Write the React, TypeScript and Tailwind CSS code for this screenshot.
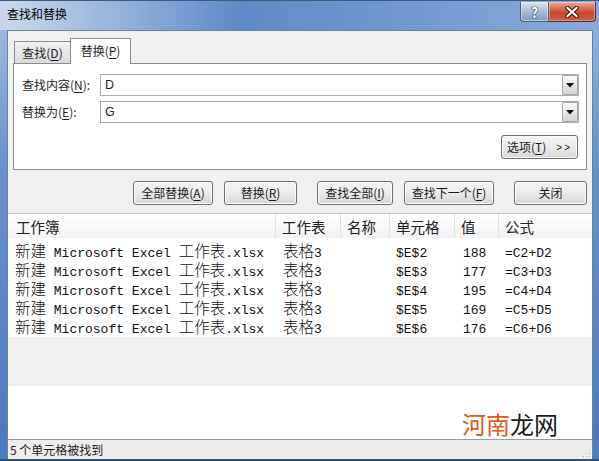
import React from "react";

const U = ({ c }: { c: string }) => (
  <span className="underline underline-offset-[2px] decoration-[1px]">{c}</span>
);

function Mixed({ t }: { t: string }) {
  const parts = t.split(/([\u4e00-\u9fff]+)/).filter((p) => p.length > 0);
  return (
    <>
      {parts.map((p, i) =>
        /[\u4e00-\u9fff]/.test(p) ? (
          <span
            key={i}
            className="inline-block font-['Noto_Sans_CJK_SC',sans-serif] font-light text-[15.5px] leading-[16px]"
          >
            {p}
          </span>
        ) : (
          <span key={i} className="inline-block font-['Liberation_Mono',monospace] text-[13px] leading-[15px]">
            {p}
          </span>
        )
      )}
    </>
  );
}

const rows = [
  ["$E$2", "188", "=C2+D2"],
  ["$E$3", "177", "=C3+D3"],
  ["$E$4", "195", "=C4+D4"],
  ["$E$5", "169", "=C5+D5"],
  ["$E$6", "176", "=C6+D6"],
];

const btn =
  "h-[24px] rounded-[3px] border border-[#707070] bg-linear-to-b from-[#f4f4f4] via-[#ebebeb] to-[#d6d6d6] flex items-center justify-center text-[12px] text-[#1b1b1b] shadow-[inset_0_0_0_1px_#fcfcfc]";

function DropBtn() {
  return (
    <div className="w-[16px] h-full border border-[#a6a6a6] rounded-[1px] bg-linear-to-b from-[#fbfbfb] to-[#d4d4d4] flex items-center justify-center">
      <svg width="8" height="5" viewBox="0 0 8 5">
        <path d="M0 0 L8 0 L4 4.5 Z" fill="#111" />
      </svg>
    </div>
  );
}

export default function App() {
  return (
    <div className="w-[599px] h-[461px] overflow-hidden flex flex-col font-['Noto_Sans_CJK_SC',sans-serif] text-[12px] text-[#1e1e1e] bg-[#4f7cbf]">
      {/* Title bar */}
      <div className="h-[30px] shrink-0 flex items-start justify-between border-t border-[#42597a] bg-linear-to-r from-[#c7d6ea] from-[2%] via-[#5e8ac7] via-[40%] to-[#88aad8]">
        <div className="pl-[7px] pt-[5px] leading-[16px] text-[12px] text-black">查找和替换</div>
        <div className="flex mr-[3px] mt-[1px]">
          <div className="w-[29px] h-[20px] rounded-bl-[4px] border border-t-0 border-[#4c5f78] bg-linear-to-b from-[#dbe5f1] via-[#a9bcd6] to-[#7f9ac0] flex items-center justify-center shadow-[inset_0_0_0_1px_rgba(255,255,255,0.45)]">
            <span className="text-white font-bold text-[14px] leading-none [text-shadow:0_0_1px_#1d2d44,0_0_1px_#1d2d44,0_0_1px_#1d2d44]">
              ?
            </span>
          </div>
          <div className="w-[47px] h-[20px] rounded-br-[4px] border border-l-0 border-t-0 border-[#5a2a22] bg-linear-to-b from-[#e8a89c] via-[#c9462f] via-[55%] to-[#c8604a] flex items-center justify-center shadow-[inset_0_0_0_1px_rgba(255,255,255,0.35)]">
            <svg width="14" height="12" viewBox="0 0 14 12">
              <path d="M2.5 2 L11.5 10 M11.5 2 L2.5 10" stroke="#3b1510" strokeWidth="4.2" strokeLinecap="square" />
              <path d="M2.5 2 L11.5 10 M11.5 2 L2.5 10" stroke="#ffffff" strokeWidth="2.2" strokeLinecap="square" />
            </svg>
          </div>
        </div>
      </div>

      {/* Body */}
      <div className="flex-1 flex min-h-0">
        <div className="w-[7px] bg-linear-to-b from-[#9bb8df] via-[#6a93cc] via-[30%] to-[#4c7ac0]" />
        <div className="w-[586px] flex flex-col bg-[#f0f0f0] border-l border-r border-t border-[#6f8198]">
          {/* Tabs */}
          <div className="mt-[7px] ml-[6px] h-[26px] flex items-end">
            <div className="mb-[1px] w-[57px] h-[22px] border border-b-0 border-[#898c95] bg-linear-to-b from-[#f2f2f2] to-[#dadada] flex items-center justify-center leading-none">
              查找(<U c="D" />)
            </div>
            <div className="relative z-10 -ml-[1px] w-[61px] h-[26px] border border-b-0 border-[#898c95] bg-white flex items-center justify-center leading-none pb-[2px]">
              替换(<U c="P" />)
            </div>
          </div>
          {/* Panel */}
          <div className="-mt-[1px] mx-[5px] h-[107px] border border-[#898c95] bg-white pt-[10px] pl-[8px] pr-[7px] flex flex-col">
            <div className="flex items-center h-[22px]">
              <div className="w-[78px]">
                查找内容(<U c="N" />):
              </div>
              <div className="flex-1 h-full border border-[#a9abb2] flex items-center justify-between pl-[4px]">
                <span className="font-['Liberation_Sans',sans-serif] text-[12.5px]">D</span>
                <DropBtn />
              </div>
            </div>
            <div className="flex items-center h-[22px] mt-[5px]">
              <div className="w-[78px]">
                替换为(<U c="E" />):
              </div>
              <div className="flex-1 h-full border border-[#a9abb2] flex items-center justify-between pl-[4px]">
                <span className="font-['Liberation_Sans',sans-serif] text-[12.5px]">G</span>
                <DropBtn />
              </div>
            </div>
            <div className="flex justify-end mt-[12px] mr-[1px]">
              <div className={`${btn} w-[77px] gap-[10px]`}>
                <span>
                  选项(<U c="T" />)
                </span>
                <span className="font-['Liberation_Sans',sans-serif] text-[10px] tracking-[2px]">&gt;&gt;</span>
              </div>
            </div>
          </div>
          {/* Buttons */}
          <div className="mt-[11px] mr-[5px] flex justify-end">
            <div className={`${btn} w-[80px]`}>
              全部替换(<U c="A" />)
            </div>
            <div className={`${btn} w-[73px] ml-[11px]`}>
              替换(<U c="R" />)
            </div>
            <div className={`${btn} w-[76px] ml-[20px]`}>
              查找全部(<U c="I" />)
            </div>
            <div className={`${btn} w-[90px] ml-[11px] border-[#3c7fb1] shadow-[inset_0_0_0_1px_#bfe6fa]`}>
              查找下一个(<U c="F" />)
            </div>
            <div className={`${btn} w-[73px] ml-[20px]`}>关闭</div>
          </div>
          {/* Results list */}
          <div className="mt-[8px] flex-1 flex flex-col bg-white">
            <div className="h-[25px] shrink-0 border-t border-[#c4c4c4] grid grid-cols-[268px_65px_49px_65px_44px_1fr] bg-linear-to-b from-white to-[#f3f3f3] text-[14.5px] text-[#222]">
              <div className="pl-[8px] pt-[1px] border-r border-[#e2e2e2] flex items-center">工作簿</div>
              <div className="pl-[6px] pt-[1px] border-r border-[#e2e2e2] flex items-center">工作表</div>
              <div className="pl-[6px] pt-[1px] border-r border-[#e2e2e2] flex items-center">名称</div>
              <div className="pl-[6px] pt-[1px] border-r border-[#e2e2e2] flex items-center">单元格</div>
              <div className="pl-[6px] pt-[1px] border-r border-[#e2e2e2] flex items-center">值</div>
              <div className="pl-[6px] pt-[1px] flex items-center">公式</div>
            </div>
            <div className="pt-[4px] bg-white">
              {rows.map((r, i) => (
                <div
                  key={i}
                  className="h-[19px] leading-[19px] grid grid-cols-[268px_65px_49px_65px_44px_1fr] whitespace-pre text-[#111]"
                >
                  <div className="pl-[7px]">
                    <Mixed t="新建 Microsoft Excel 工作表.xlsx" />
                  </div>
                  <div className="pl-[7px]">
                    <Mixed t="表格3" />
                  </div>
                  <div />
                  <div className="pl-[6px]">
                    <Mixed t={r[0]} />
                  </div>
                  <div className="pl-[8px]">
                    <Mixed t={r[1]} />
                  </div>
                  <div className="pl-[6px]">
                    <Mixed t={r[2]} />
                  </div>
                </div>
              ))}
            </div>
            <div className="h-[49px] shrink-0 bg-[#f0f0f0]" />
            <div className="flex-1 relative bg-white">
              <div className="absolute top-[25px] right-[34px] text-[24px] leading-[26px] font-['Noto_Sans_CJK_SC',sans-serif]">
                <span className="text-[#e2581c]">河南</span>
                <span className="text-[#1a1a1a]">龙网</span>
              </div>
            </div>
          </div>
          {/* Status bar */}
          <div className="h-[20px] shrink-0 border-t border-[#9c9c9c] bg-[#f0eeec] flex items-center justify-between pl-[2px] pr-[1px]">
            <span className="text-[12px] text-[#1b1b1b] leading-none">5 个单元格被找到</span>
            <svg width="10" height="10" viewBox="0 0 10 10" className="self-end mb-[1px]">
              <g fill="#b5b5b5">
                <rect x="8" y="2" width="1" height="1" />
                <rect x="5" y="5" width="1" height="1" />
                <rect x="8" y="5" width="1" height="1" />
                <rect x="2" y="8" width="1" height="1" />
                <rect x="5" y="8" width="1" height="1" />
                <rect x="8" y="8" width="1" height="1" />
              </g>
            </svg>
          </div>
        </div>
        <div className="w-[6px] bg-linear-to-b from-[#8eb0dc] via-[#6a93cc] via-[30%] to-[#4c7ac0]" />
      </div>
      <div className="h-[2px] shrink-0 bg-[#2f4f7f]" />
    </div>
  );
}
